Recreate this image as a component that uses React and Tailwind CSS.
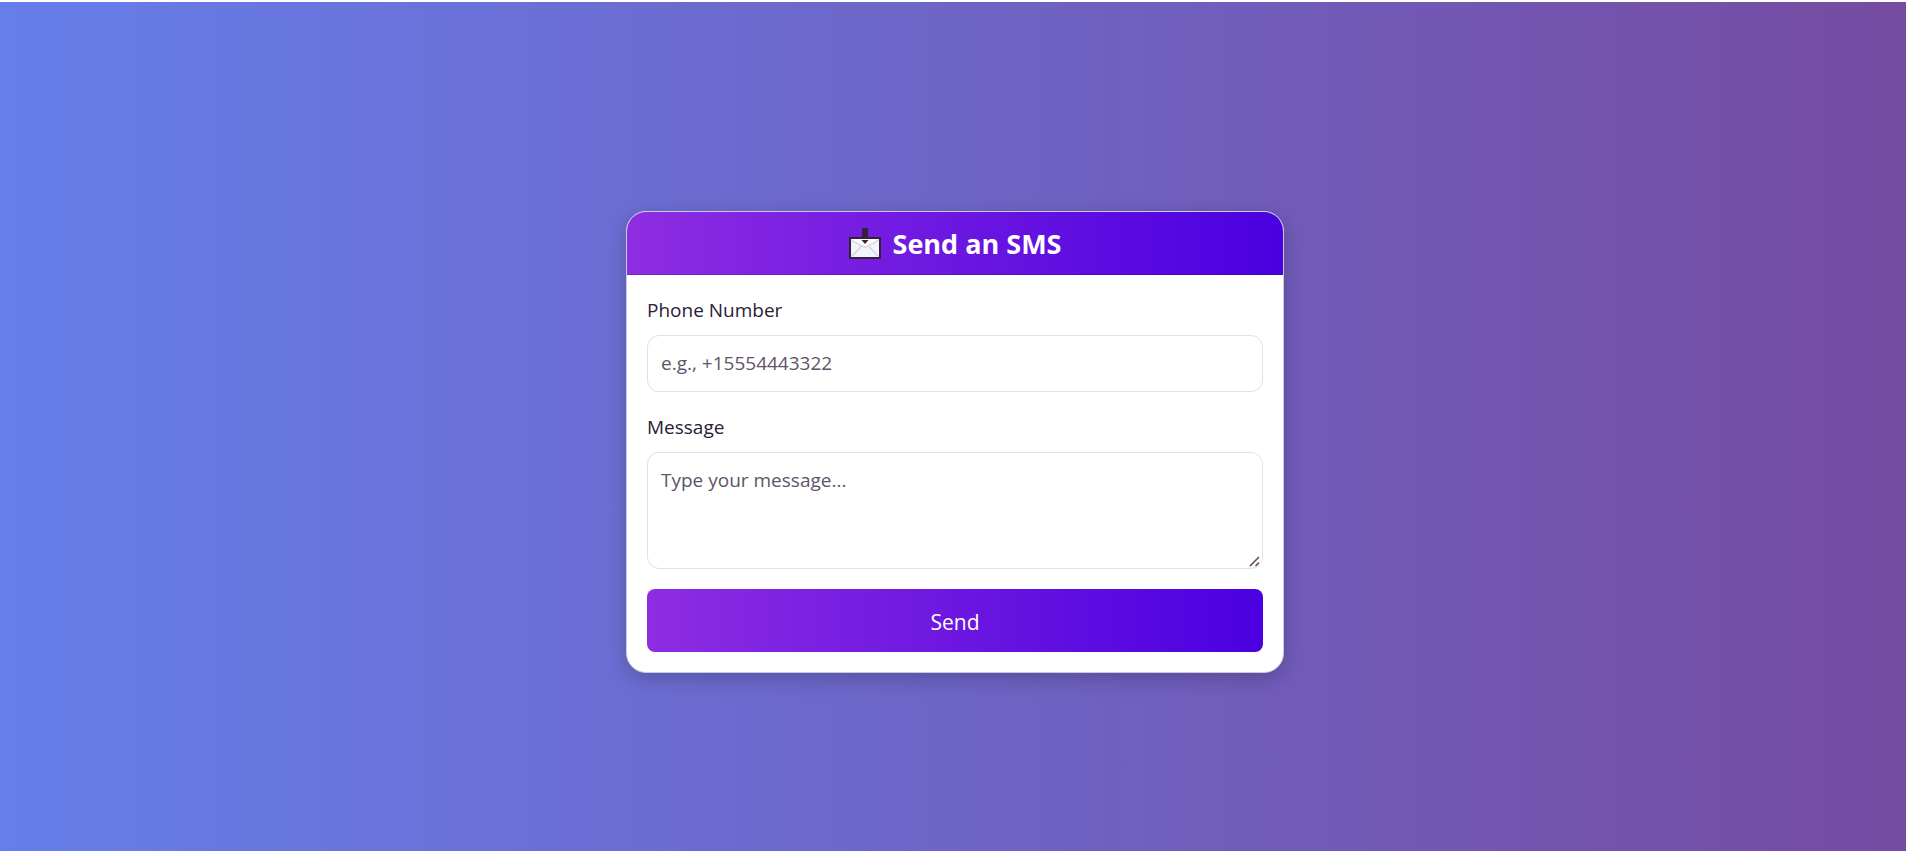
function EnvelopeIcon() {
  return (
    <svg width="32" height="32" viewBox="0 0 32 32" aria-hidden="true" className="shrink-0">
      <rect x="1" y="10" width="30" height="20" fill="#f2f4fd" stroke="#33203a" strokeWidth="2" />
      <path d="M2 11H30L16 19.500Z" fill="#fdfdff" />
      <path d="M2 12L14 18.500Q16 20 18 18.500L30 12M2.500 28.500L12.500 18M29.500 28.500L19.500 18" fill="none" stroke="#d3d3dc" strokeWidth="1.300" />
      <path d="M13 0H19V11H13Z" fill="#33203a" />
      <path d="M12.500 12H19.500L16 16Z" fill="#43202c" />
    </svg>
  );
}

function ResizeGrip() {
  return (
    <svg
      width="12"
      height="12"
      viewBox="0 0 12 12"
      aria-hidden="true"
      className="pointer-events-none absolute right-0.5 bottom-0.5"
    >
      <path d="M1 11L10 2M6.500 11L10 7.500" fill="none" stroke="#6b5257" strokeWidth="1.700" />
    </svg>
  );
}

export default function App() {
  return (
    <div className="flex min-h-screen flex-col bg-white pt-0.5 font-['Open_Sans','Noto_Sans',sans-serif] text-[#2b2038]">
      <main className="flex grow items-center justify-center bg-linear-to-r/srgb from-[#667eea] to-[#764ba2] pt-[30px] pr-4 pl-5">
        <section className="w-full max-w-[658px] overflow-hidden rounded-[20px] border border-[#c9cbdc] bg-white shadow-[0_6px_20px_rgba(0,0,0,0.2)]">
          <header className="flex items-center justify-center gap-3 border-b border-black/15 bg-linear-to-r/srgb from-[#8e2de2] to-[#4a00e0] pt-4 pb-3.5 text-white">
            <EnvelopeIcon />
            <h1 className="text-[27px] leading-8 font-bold">Send an SMS</h1>
          </header>
          <form className="flex flex-col p-5" onSubmit={(e) => e.preventDefault()}>
            <label htmlFor="phone" className="mb-2.5 text-[19px] leading-[30px]">
              Phone Number
            </label>
            <input
              id="phone"
              type="tel"
              placeholder="e.g., +15554443322"
              className="mb-5 h-[57px] w-full rounded-xl border border-[#dce1ec] px-[13px] text-[19px] leading-[30px] placeholder:text-[#5f5468]"
            />
            <label htmlFor="message" className="mb-2.5 text-[19px] leading-[30px]">
              Message
            </label>
            <div className="relative mb-5">
              <textarea
                id="message"
                placeholder="Type your message..."
                className="block h-[117px] w-full resize-y rounded-xl border border-[#dce1ec] px-[13px] py-3 text-[19px] leading-[30px] placeholder:text-[#5f5468] [&::-webkit-resizer]:bg-transparent"
              />
              <ResizeGrip />
            </div>
            <button
              type="submit"
              className="rounded-lg bg-linear-to-r/srgb from-[#8e2de2] to-[#4a00e0] pt-[17px] pb-3.5 text-[21px] leading-8 text-white"
            >
              Send
            </button>
          </form>
        </section>
      </main>
    </div>
  );
}
